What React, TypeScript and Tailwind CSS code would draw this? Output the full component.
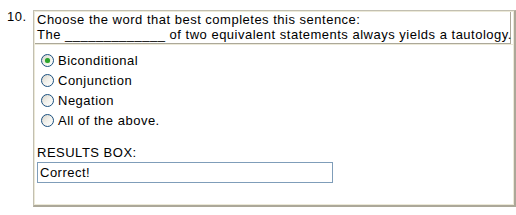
const options = [
    { label: "Biconditional", checked: true },
    { label: "Conjunction", checked: false },
    { label: "Negation", checked: false },
    { label: "All of the above.", checked: false },
];

const Radio = ({ checked }: { checked: boolean }) => (
    <span className="flex h-[13px] w-[13px] shrink-0 items-center justify-center rounded-full border border-[#1c5180] bg-gradient-to-br from-[#d6d4cc] via-[#f2f1ec] to-white">
        {checked && <span className="h-[5px] w-[5px] rounded-full bg-[#2ca32c] shadow-[0_0_1px_#7fd17f]" />}
    </span>
);

export default function App() {
    return (
        <div
            className="flex h-[215px] w-[516px] items-start bg-white pl-[7px] pt-[10px] text-[13px] leading-[15px] tracking-[0.5px] text-black"
            style={{ fontFamily: '"Liberation Sans", Arial, sans-serif' }}
        >
            <div className="-mt-[1px] w-[26px]">10.</div>

            <div className="w-[483px] border-l border-t border-[#c2bfb1] border-b-2 border-r-2 border-b-[#aca899] border-r-[#aca899]">
                <div className="border border-[#ece9d8]">
                    <div className="mr-[2px] border-b border-r border-[#aca899] pb-[1px] pl-[2px]">
                        <div>Choose the word that best completes this sentence:</div>
                        <div className="whitespace-nowrap">The _____________ of two equivalent statements always yields a tautology.</div>
                    </div>

                    <div className="border-t border-[#ece9d8] pb-[21px] pl-[2px] pt-[5px]">
                        {options.map((o) => (
                            <label key={o.label} className="ml-[4px] flex h-[20px] items-center gap-[4px]">
                                <Radio checked={o.checked} />
                                <span>{o.label}</span>
                            </label>
                        ))}

                        <div className="mt-[15px]">RESULTS BOX:</div>
                        <div className="mt-[2px] flex h-[21px] w-[296px] items-center border border-[#7f9db9] pl-[2px]">
                            Correct!
                        </div>
                    </div>
                </div>
            </div>
        </div>
    );
}
